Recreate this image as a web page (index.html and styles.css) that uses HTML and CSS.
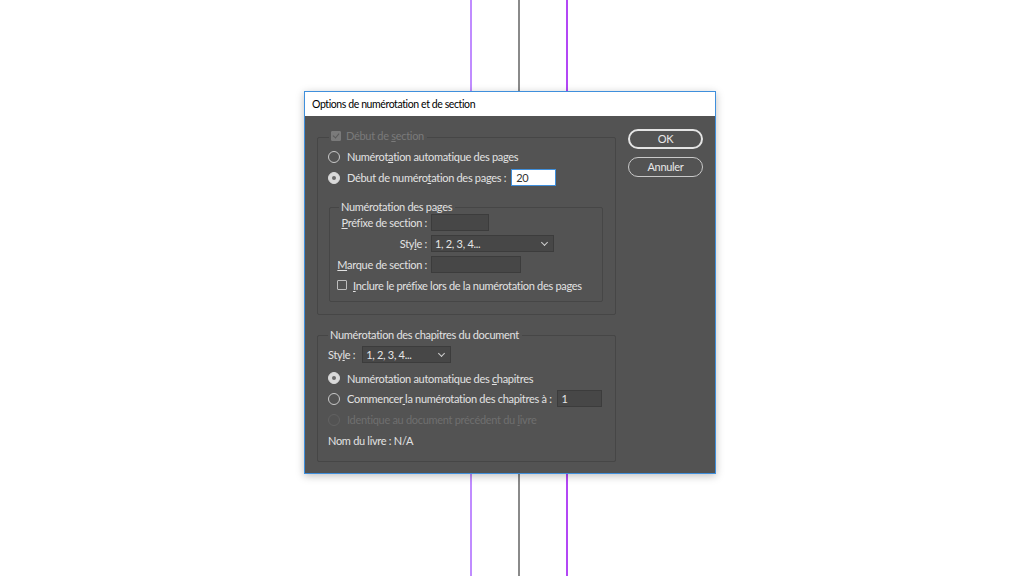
FILE: index.html
```html
<!DOCTYPE html>
<html lang="fr">
<head>
<meta charset="utf-8">
<title>Options de numérotation et de section</title>
<link rel="stylesheet" href="styles.css">
</head>
<body>
<div class="guide guide-a"></div>
<div class="guide guide-b"></div>
<div class="guide guide-c"></div>

<div class="dialog">
  <div class="titlebar">Options de numérotation et de section</div>
  <div class="dbody">
    <div class="main">
      <fieldset class="group g1">
        <legend class="legend disabled"><span class="check checked dis"></span><span class="lt">Début de <u>s</u>ection</span></legend>
        <div class="row"><span class="radio"></span><span>Numérot<u>a</u>tion automatique des pages</span></div>
        <div class="row"><span class="radio on"></span><span>Début de numéro<u>t</u>ation des pages :</span><span class="field focus w45">20</span></div>
        <fieldset class="group inner">
          <legend class="legend">Numérotation des pages</legend>
          <div class="grid">
            <span class="lbl"><u>P</u>réfixe de section :</span><span class="field w57"></span>
            <span class="lbl">Sty<u>l</u>e :</span><span class="select w122">1, 2, 3, 4...<span class="chev"></span></span>
            <span class="lbl"><u>M</u>arque de section :</span><span class="field w89"></span>
          </div>
          <div class="row incl"><span class="check"></span><span><u>I</u>nclure le préfixe lors de la numérotation des pages</span></div>
        </fieldset>
      </fieldset>

      <fieldset class="group g2">
        <legend class="legend">Numérotation des chapitres du document</legend>
        <div class="row style2"><span>Sty<u>l</u>e :</span><span class="select w88">1, 2, 3, 4...<span class="chev"></span></span></div>
        <div class="row r2"><span class="radio on"></span><span>Numérotation automatique des <u>c</u>hapitres</span></div>
        <div class="row"><span class="radio"></span><span>Commencer<u> </u>la numérotation des chapitres à :</span><span class="field w45 ch">1</span></div>
        <div class="row disabled"><span class="radio dis"></span><span>Identique au document précédent du <u>l</u>ivre</span></div>
        <div class="row nom"><span>Nom du livre : N/A</span></div>
      </fieldset>
    </div>
    <div class="buttons">
      <div class="btn default">OK</div>
      <div class="btn">Annuler</div>
    </div>
  </div>
</div>
</body>
</html>
```
FILE: styles.css
```css
html, body {
  margin: 0;
  padding: 0;
}
body {
  width: 1024px;
  height: 576px;
  background: #ffffff;
  position: relative;
  overflow: hidden;
  font-family: "Lato", "Noto Sans", sans-serif;
  font-size: 11px;
  letter-spacing: -0.3px;
  display: flex;
  align-items: flex-start;
}
.guide {
  position: absolute;
  top: 0;
  bottom: 0;
}
.guide-a { left: 470px; width: 2px; background: #c08cff; }
.guide-b { left: 518px; width: 2px; background: #8a8a8a; }
.guide-c { left: 566px; width: 2px; background: #b347f5; }

.dialog {
  position: relative;
  z-index: 1;
  margin: 91px 0 0 304px;
  width: 410px;
  border: 1px solid #3f8fdc;
  background: #535353;
  box-shadow: 0 2px 8px rgba(0,0,0,0.25);
}
.titlebar {
  height: 24px;
  background: #ffffff;
  color: #000;
  font-size: 10.5px;
  letter-spacing: -0.4px;
  line-height: 24px;
  padding-left: 7px;
}
.dbody {
  display: flex;
  padding: 0 12px 11px 12px;
}
.main {
  width: 299px;
  display: flex;
  flex-direction: column;
}
.group {
  margin: 0;
  border: 1px solid #464646;
  border-radius: 2px;
  min-width: 0;
}
.legend {
  line-height: 12px;
  height: 12px;
  padding: 0 3px 0 2px;
  color: #e2e2e2;
  display: flex;
  align-items: center;
  gap: 5px;
  white-space: nowrap;
}
.legend.disabled { color: #7a7a7a; }
.legend .lt, .legend .check { position: relative; top: -1px; }
.g1 {
  margin-top: 15px;
  padding: 3px 11px 11px 10px;
  height: 184px;
  box-sizing: border-box;
}
.g1 > .legend { margin-left: 1px; }
.g2 {
  margin-top: 14px;
  padding: 3px 11px 9px 10px;
  height: 133px;
  box-sizing: border-box;
}
.row {
  height: 21px;
  display: flex;
  align-items: center;
  color: #e2e2e2;
  white-space: nowrap;
}
.row.disabled { color: #6f6f6f; }
.radio {
  width: 10px;
  height: 10px;
  border: 1px solid #c9c9c9;
  border-radius: 50%;
  margin-right: 7px;
  flex: none;
  box-sizing: content-box;
}
.radio.on {
  background: #d9d9d9;
  border-color: #d9d9d9;
  position: relative;
}
.radio.on::after {
  content: "";
  position: absolute;
  left: 3px;
  top: 3px;
  width: 4px;
  height: 4px;
  border-radius: 50%;
  background: #6a6a6a;
}
.radio.dis { border-color: #626262; }
.check {
  width: 8px;
  height: 8px;
  border: 1px solid #bdbdbd;
  border-radius: 1px;
  flex: none;
  margin-right: 6px;
  position: relative;
}
.check.checked.dis {
  background: #7a7a7a;
  border-color: #7a7a7a;
  margin-right: 0;
}
.check.checked.dis::after {
  content: "";
  position: absolute;
  left: 2px;
  top: 0px;
  width: 3px;
  height: 5px;
  border-right: 1.5px solid #5a5a5a;
  border-bottom: 1.5px solid #5a5a5a;
  transform: rotate(40deg);
}
.field, .select {
  height: 15px;
  border: 1px solid #3c3c3c;
  background: #474747;
  color: #e6e6e6;
  line-height: 15px;
  padding-left: 3px;
  box-sizing: content-box;
  display: inline-block;
  flex: none;
}
.field.focus {
  background: #ffffff;
  border-color: #3f8fdc;
  color: #333;
  margin-left: 5px;
  padding-left: 4px;
}
.field.ch { margin-left: 5px; padding-left: 4px; }
.w45 { width: 39px; }
.w57 { width: 53px; }
.w89 { width: 85px; }
.w122 { width: 118px; }
.w88 { width: 84px; }
.select {
  position: relative;
  color: #e6e6e6;
}
.chev {
  position: absolute;
  right: 6px;
  top: 4px;
  width: 4px;
  height: 4px;
  border-right: 1px solid #cfcfcf;
  border-bottom: 1px solid #cfcfcf;
  transform: rotate(45deg);
}
.inner {
  margin: 13px 0 0 1px;
  padding: 0 10px 5px 8px;
  height: 101px;
  box-sizing: border-box;
  width: 274px;
}
.inner .legend { margin-left: 1px; }
.grid {
  display: grid;
  grid-template-columns: 95px auto;
  column-gap: 4px;
  grid-auto-rows: 21px;
  align-items: center;
  color: #e2e2e2;
  margin: -1px 0 0 -6px;
}
.grid .lbl { text-align: right; white-space: nowrap; }
.grid .field, .grid .select { justify-self: start; }
.incl { height: 20px; }
.incl .check { margin-right: 6px; margin-left: -1px; }
.style2 { height: 20px; }
.style2 .select { margin-left: 7px; }
.r2 { margin-top: 4px; height: 20px; }
.nom { margin-top: 0; }

.buttons {
  margin-left: 12px;
  padding-top: 13px;
  display: flex;
  flex-direction: column;
  gap: 8px;
}
.btn {
  width: 73px;
  height: 18px;
  border: 1px solid #c9c9c9;
  border-radius: 10px;
  color: #e8e8e8;
  text-align: center;
  line-height: 18px;
  box-sizing: content-box;
}
.btn.default {
  width: 71px;
  height: 16px;
  line-height: 16px;
  border: 2px solid #e4e4e4;
}
```
